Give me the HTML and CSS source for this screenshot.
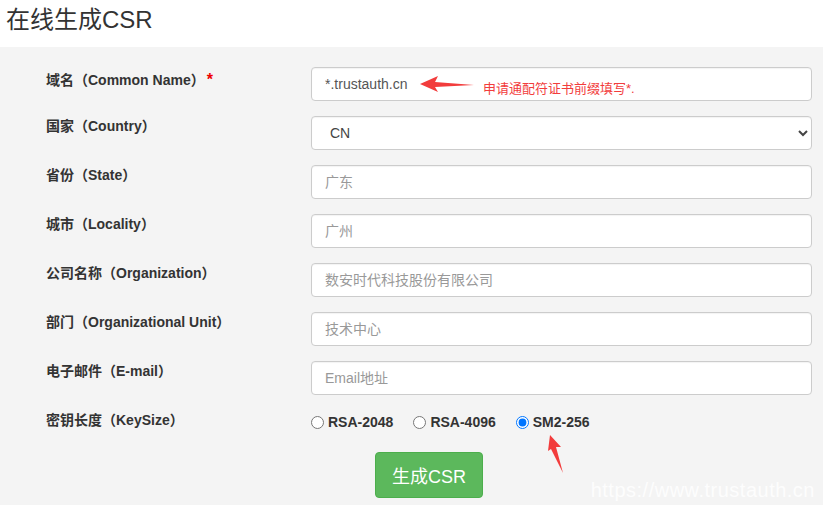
FILE: index.html
```html
<!DOCTYPE html>
<html lang="zh">
<head>
<meta charset="utf-8">
<title>在线生成CSR</title>
<link rel="stylesheet" href="styles.css">
</head>
<body>
<h1 class="title">在线生成CSR</h1>
<div class="panel">
  <form class="form">
    <div class="row">
      <label class="label">域名（Common Name）<span class="req">*</span></label>
      <div class="field">
        <input class="input" type="text" value="*.trustauth.cn">
        <svg class="arrow1" width="60" height="20" viewBox="0 0 60 20"><polygon points="0,8 18,0 15,6 54,9 15,11 18,16" fill="#f23c3c"/></svg>
        <span class="hint">申请通配符证书前缀填写*.</span>
      </div>
    </div>
    <div class="row">
      <label class="label">国家（Country）</label>
      <div class="field">
        <select class="input select"><option>CN</option></select>
      </div>
    </div>
    <div class="row">
      <label class="label">省份（State）</label>
      <div class="field"><input class="input" type="text" placeholder="广东"></div>
    </div>
    <div class="row">
      <label class="label">城市（Locality）</label>
      <div class="field"><input class="input" type="text" placeholder="广州"></div>
    </div>
    <div class="row">
      <label class="label">公司名称（Organization）</label>
      <div class="field"><input class="input" type="text" placeholder="数安时代科技股份有限公司"></div>
    </div>
    <div class="row">
      <label class="label">部门（Organizational Unit）</label>
      <div class="field"><input class="input" type="text" placeholder="技术中心"></div>
    </div>
    <div class="row">
      <label class="label">电子邮件（E-mail）</label>
      <div class="field"><input class="input" type="text" placeholder="Email地址"></div>
    </div>
    <div class="row radio-row">
      <label class="label">密钥长度（KeySize）</label>
      <div class="radios">
        <label class="radio"><input type="radio" name="ks">RSA-2048</label>
        <label class="radio"><input type="radio" name="ks">RSA-4096</label>
        <label class="radio"><input type="radio" name="ks" checked>SM2-256</label>
        <svg class="arrow2" width="20" height="40" viewBox="0 0 20 40"><polygon points="3,0 14,12 9,12 16,38 4,14 1,16" fill="#f23c3c"/></svg>
      </div>
    </div>
    <div class="actions">
      <button class="btn" type="button">生成CSR</button>
    </div>
  </form>
  <div class="watermark">https://www.trustauth.cn</div>
</div>
</body>
</html>
```

FILE: styles.css
```css
html, body {
  margin: 0;
  padding: 0;
  background: #fff;
  font-family: "Liberation Sans", Arial, "Noto Sans CJK SC", sans-serif;
  color: #333;
}
.title {
  margin: 0;
  height: 47px;
  padding-left: 6px;
  font-size: 24px;
  font-weight: normal;
  line-height: 40px;
  color: #333;
}
.panel {
  position: relative;
  background: #f4f4f4;
  height: 458px;
  box-sizing: border-box;
  padding: 20px 11px 0 46px;
}
.form {
  display: flex;
  flex-direction: column;
}
.row {
  display: flex;
  align-items: flex-start;
  height: 49px;
}
.label {
  width: 265px;
  flex: none;
  font-size: 14px;
  font-weight: bold;
  line-height: 20px;
  padding-top: 0;
  color: #333;
}
.row:first-child .label {
  padding-top: 3px;
}
.req {
  color: #e00;
  font-size: 16px;
  line-height: 0;
  margin-left: 2px;
}
.field {
  position: relative;
  flex: 1;
}
.input {
  box-sizing: border-box;
  width: 100%;
  height: 34px;
  border: 1px solid #ccc;
  border-radius: 4px;
  background: #fff;
  padding: 0 13px;
  font-family: "Liberation Sans", Arial, "Noto Sans CJK SC", sans-serif;
  font-size: 14px;
  color: #555;
  box-shadow: inset 0 1px 1px rgba(0,0,0,0.05);
  outline: none;
}
.input::placeholder {
  color: #999;
}
.select {
  padding-left: 14px;
  color: #444;
}
.arrow1 {
  position: absolute;
  left: 109px;
  top: 9px;
}
.hint {
  position: absolute;
  left: 172px;
  top: 11px;
  font-size: 13px;
  color: #f23c3c;
}
.radio-row {
  height: 43px;
}
.radios {
  position: relative;
  display: flex;
  gap: 20px;
  padding-top: 3px;
}
.radio {
  display: flex;
  align-items: center;
  font-size: 14px;
  font-weight: bold;
  line-height: 18px;
  color: #333;
}
.radio input {
  margin: 0 4px 0 0;
  width: 13px;
  height: 13px;
}
.arrow2 {
  position: absolute;
  left: 236px;
  top: 25px;
}
.actions {
  padding-left: 329px;
  margin-top: -1px;
}
.btn {
  width: 108px;
  height: 46px;
  border: 1px solid #4cae4c;
  border-radius: 4px;
  background: #5cb85c;
  color: #fff;
  font-family: "Liberation Sans", Arial, "Noto Sans CJK SC", sans-serif;
  font-size: 18px;
  cursor: pointer;
}
.watermark {
  position: absolute;
  right: 8px;
  bottom: 3px;
  font-size: 20px;
  color: rgba(255,255,255,0.85);
  letter-spacing: 0.5px;
}
```
